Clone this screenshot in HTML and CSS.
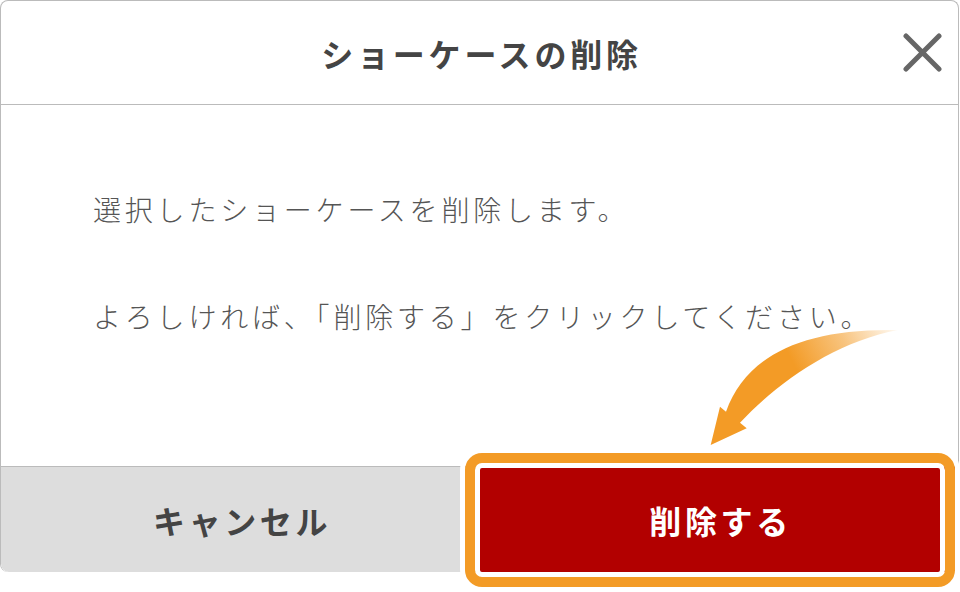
FILE: index.html
```html
<!DOCTYPE html>
<html lang="ja">
<head>
<meta charset="utf-8">
<title>ショーケースの削除</title>
<link rel="stylesheet" href="styles.css">
</head>
<body>
<div class="page">
  <div class="dialog">
    <header class="head">
      <span class="head-side"></span>
      <h1 class="title">ショーケースの削除</h1>
      <span class="head-side head-right">
        <button class="close" aria-label="閉じる">
          <svg width="39" height="39" viewBox="0 0 39 39"><path d="M3 3 L36 36 M36 3 L3 36" stroke="#666" stroke-width="5" stroke-linecap="round" fill="none"/></svg>
        </button>
      </span>
    </header>
    <div class="body">
      <p class="msg">選択したショーケースを削除します。</p>
      <p class="msg">よろしければ、「削除する」をクリックしてください。</p>
    </div>
    <div class="foot">
      <button class="btn cancel">キャンセル</button>
      <button class="btn delete">削除する</button>
    </div>
  </div>
  <div class="highlight"></div>
  <svg class="arrow" width="220" height="135" viewBox="0 0 220 135">
    <defs>
      <linearGradient id="ag" gradientUnits="userSpaceOnUse" x1="208" y1="10" x2="70" y2="80">
        <stop offset="0" stop-color="#f39b26" stop-opacity="0.05"/>
        <stop offset="0.35" stop-color="#f39b26" stop-opacity="0.6"/>
        <stop offset="0.7" stop-color="#f39b26" stop-opacity="1"/>
        <stop offset="1" stop-color="#f39b26" stop-opacity="1"/>
      </linearGradient>
    </defs>
    <path d="M20.7 125 L30 86.7 L36 91.7 C56 36 112 8 208 10 C145 22 88 62 50 102.7 L56.7 108.3 Z" fill="url(#ag)"/>
  </svg>
</div>
</body>
</html>
```

FILE: styles.css
```css
* { box-sizing: border-box; }
html, body { margin: 0; padding: 0; background: #fff; }
body { font-family: "Noto Sans CJK JP", "Noto Sans", sans-serif; }

.page {
  position: relative;
  width: 960px;
  height: 592px;
  overflow: hidden;
}

.dialog {
  width: 959px;
  border: 1px solid #bbbbbb;
  border-bottom: none;
  border-radius: 8px;
  overflow: hidden;
  background: #fff;
}

.head {
  height: 104px;
  border-bottom: 1px solid #bbbbbb;
  display: grid;
  grid-template-columns: 1fr auto 1fr;
  align-items: center;
}
.title {
  margin: 0;
  font-size: 32px;
  font-weight: 700;
  color: #444;
  letter-spacing: 3.8px;
  padding-left: 4px;
  line-height: 40px;
}
.head-right {
  display: flex;
  justify-content: flex-end;
  padding-right: 16px;
}
.close {
  border: 0;
  background: none;
  padding: 0;
  width: 39px;
  height: 39px;
  display: block;
  margin-top: -1px;
}
.close svg { display: block; }

.body {
  height: 361px;
  padding: 84px 0 0 92px;
  display: flex;
  flex-direction: column;
  gap: 67px;
}
.msg {
  margin: 0;
  font-size: 28px;
  font-weight: 300;
  line-height: 40px;
  color: #555;
  letter-spacing: 3.8px;
}

.foot {
  display: grid;
  grid-template-columns: 1fr 1fr;
  border-top: 1px solid #bbbbbb;
  height: 106px;
}
.btn {
  border: 0;
  margin: 0;
  font-family: inherit;
  font-size: 32px;
  font-weight: 700;
  letter-spacing: 3.6px;
  text-indent: 3.6px;
  padding: 0;
  line-height: 40px;
}
.cancel {
  background: #dddddd;
  color: #444;
  border-bottom-left-radius: 8px;
}
.delete {
  background: #b20000;
  color: #fff;
}

.highlight {
  position: absolute;
  left: 465px;
  top: 453px;
  width: 490px;
  height: 134px;
  border: 10px solid #f39b26;
  border-radius: 17px;
  box-shadow: 0 0 0 5px #fff, inset 0 0 0 5px #fff;
}

.arrow {
  position: absolute;
  left: 690px;
  top: 320px;
}
```
